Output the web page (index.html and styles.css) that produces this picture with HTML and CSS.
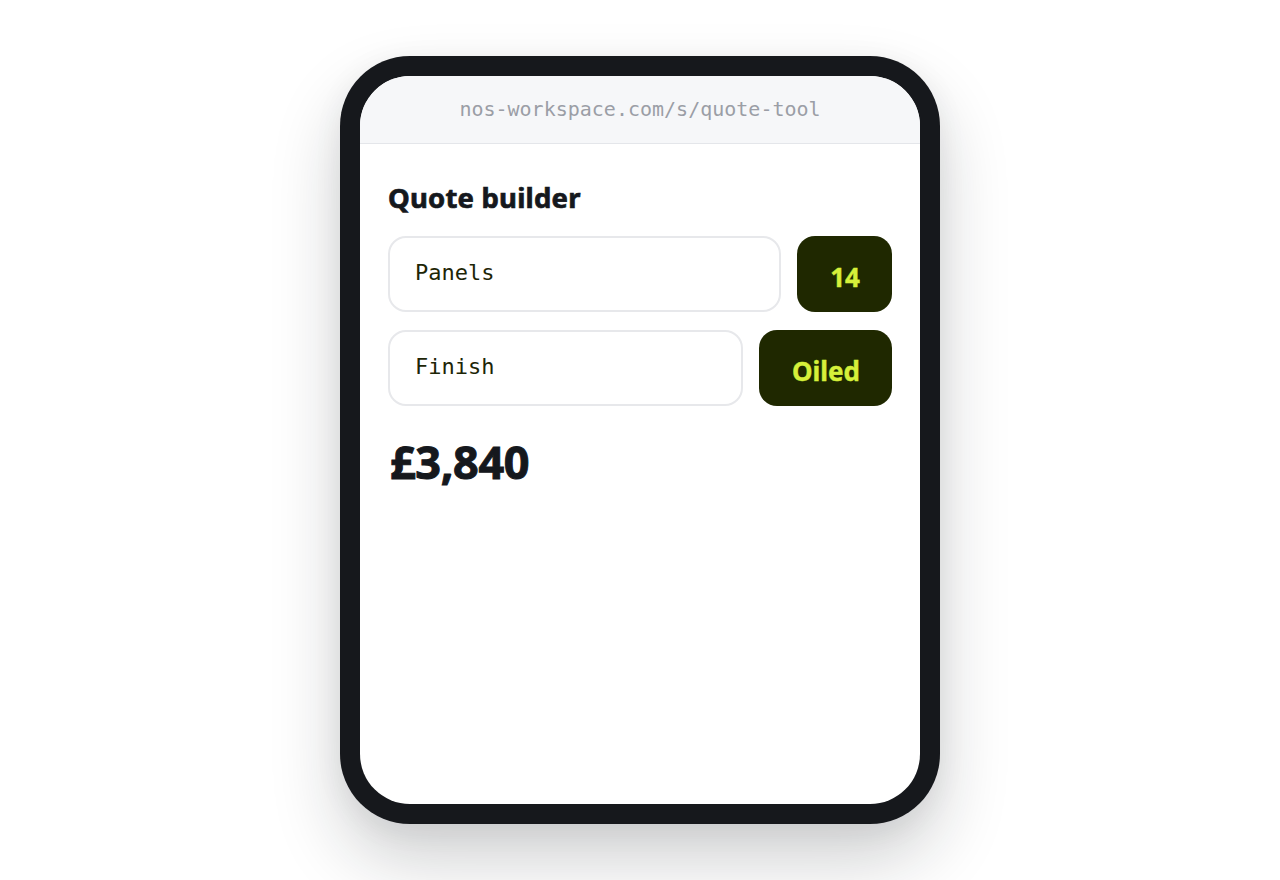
FILE: index.html
```html
<!DOCTYPE html>
<html lang="en">
<head>
<meta charset="utf-8">
<title>Quote builder</title>
<link rel="stylesheet" href="styles.css">
</head>
<body>
<div class="stage">
  <div class="phone">
    <div class="screen">
      <div class="urlbar">nos-workspace.com/s/quote-tool</div>
      <div class="content">
        <h1 class="title">Quote builder</h1>
        <div class="row">
          <div class="field">Panels</div>
          <button class="chip">14</button>
        </div>
        <div class="row">
          <div class="field">Finish</div>
          <button class="chip">Oiled</button>
        </div>
        <div class="price">£3,840</div>
      </div>
    </div>
  </div>
</div>
</body>
</html>
```
FILE: styles.css
```css
* { box-sizing: border-box; }
html, body { margin: 0; padding: 0; background: #ffffff; }
body { font-family: "Noto Sans", "Open Sans", sans-serif; }
.stage {
  width: 1280px;
  height: 880px;
  display: flex;
  align-items: center;
  justify-content: center;
}
.phone {
  width: 600px;
  height: 768px;
  background: #16181c;
  border-radius: 70px;
  padding: 20px;
  box-shadow: 0 36px 70px rgba(20, 24, 30, 0.2), 0 6px 30px rgba(20, 24, 30, 0.06);
}
.screen {
  width: 100%;
  height: 100%;
  background: #ffffff;
  border-radius: 50px;
  overflow: hidden;
  display: flex;
  flex-direction: column;
}
.urlbar {
  height: 68px;
  flex: none;
  background: #f6f7f9;
  border-bottom: 1px solid #e4e6ea;
  display: flex;
  align-items: center;
  justify-content: center;
  font-family: "DejaVu Sans Mono", monospace;
  font-size: 20px;
  color: #9b9ea6;
  padding-bottom: 2px;
}
.content {
  padding: 36px 28px 0 28px;
  display: flex;
  flex-direction: column;
}
.title {
  margin: 0 0 20px 0;
  font-family: "Noto Sans", "Open Sans", sans-serif;
  font-size: 27.5px;
  font-weight: 700;
  -webkit-text-stroke: 0.7px #15181d;
  color: #15181d;
  line-height: 36px;
  letter-spacing: 0.2px;
}
.row {
  display: flex;
  gap: 16px;
  margin-bottom: 18px;
}
.field {
  flex: 1;
  height: 76px;
  border: 2px solid #e7e8eb;
  border-radius: 18px;
  display: flex;
  align-items: center;
  padding: 0 0 4px 25px;
  font-family: "DejaVu Sans Mono", monospace;
  font-size: 22px;
  color: #1d2506;
}
.chip {
  flex: none;
  height: 76px;
  border: none;
  border-radius: 18px;
  background: #1f2800;
  color: #d6f03a;
  font-family: "Noto Sans", "Open Sans", sans-serif;
  font-size: 26px;
  font-weight: 700;
  -webkit-text-stroke: 0.4px #d6f03a;
  padding: 6px 32px 0 33px;
}
.price {
  margin-top: 10px;
  padding-left: 2px;
  font-family: "Noto Sans", "Open Sans", sans-serif;
  font-size: 45px;
  font-weight: 700;
  -webkit-text-stroke: 1px #15181d;
  color: #15181d;
  line-height: 56px;
  letter-spacing: -0.4px;
}
```
